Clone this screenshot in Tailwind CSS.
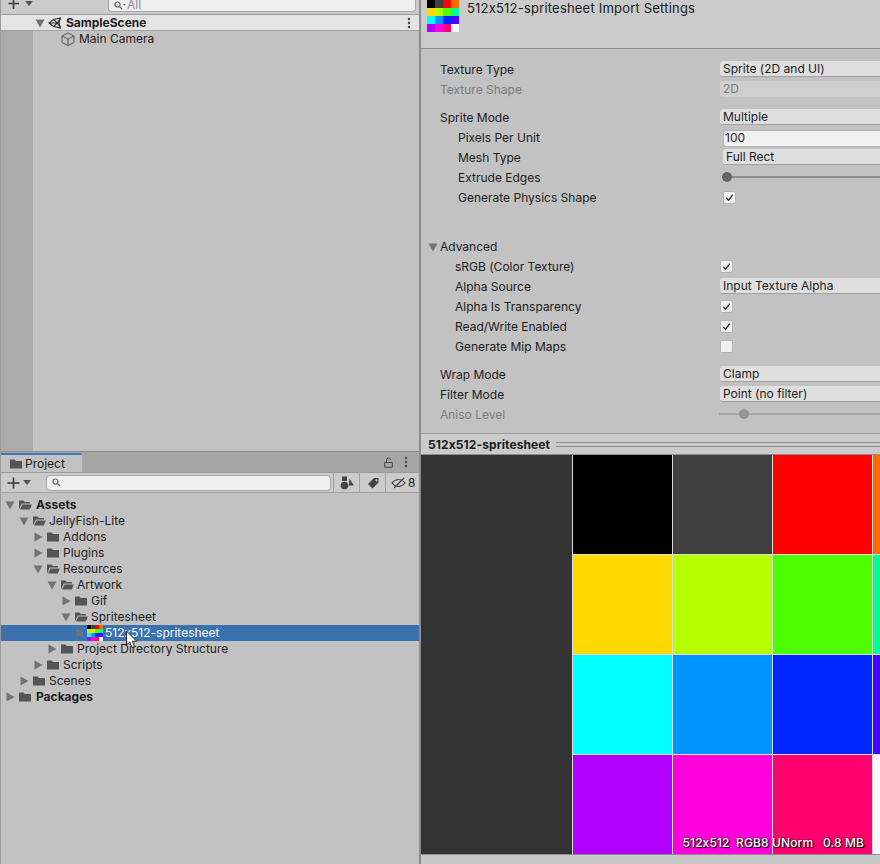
<!DOCTYPE html>
<html lang="en">
<head>
  <meta charset="UTF-8">
  <title>Unity Import Settings</title>
  <script src="https://cdn.jsdelivr.net/npm/@tailwindcss/browser@4"></script>
</head>
<body class="bg-[#c2c2c2]">
  <svg class="hidden">
    <symbol id="down" viewBox="0 0 10 10"><path d="M0.5 1.5H9.5L5 9.5Z" fill="#737373"/></symbol>
    <symbol id="right" viewBox="0 0 10 10"><path d="M1.5 0.5V9.5L9.5 5Z" fill="#737373"/></symbol>
    <symbol id="closed" viewBox="0 0 14 14"><path d="M1 2.500H5.500L7 4H13V11.500H1Z" fill="#555"/></symbol>
    <symbol id="open" viewBox="0 0 14 14"><path d="M1 2.500H5.500L7 4H12V5.500H3.800L1 11.500ZM4.500 6.500H13.800L11.800 11.500H2Z" fill="#555"/></symbol>
    <symbol id="check" viewBox="0 0 12 12"><path d="M2.500 6.500L5 9L9.500 3" fill="none" stroke="#333" stroke-width="1.400"/></symbol>
    <symbol id="thumb" viewBox="0 0 4 4" shape-rendering="crispEdges">
      <rect width="1" height="1" fill="#000"/><rect x="1" width="1" height="1" fill="#404040"/><rect x="2" width="1" height="1" fill="#f00"/><rect x="3" width="1" height="1" fill="#ff6a00"/>
      <rect y="1" width="1" height="1" fill="#ffd800"/><rect x="1" y="1" width="1" height="1" fill="#b6ff00"/><rect x="2" y="1" width="1" height="1" fill="#4cff00"/><rect x="3" y="1" width="1" height="1" fill="#00ff90"/>
      <rect y="2" width="1" height="1" fill="#0ff"/><rect x="1" y="2" width="1" height="1" fill="#0094ff"/><rect x="2" y="2" width="1" height="1" fill="#0026ff"/><rect x="3" y="2" width="1" height="1" fill="#4800ff"/>
      <rect y="3" width="1" height="1" fill="#b200ff"/><rect x="1" y="3" width="1" height="1" fill="#ff00dc"/><rect x="2" y="3" width="1" height="1" fill="#ff006e"/><rect x="3" y="3" width="1" height="1" fill="#f6f6fb"/>
    </symbol>
  </svg>

  <div class="relative flex h-[864px] w-[880px] overflow-hidden font-['Inter',sans-serif] text-[12px] text-[#1c1c1c] [font-variant-ligatures:no-contextual]">

    <!-- Left column -->
    <div class="flex w-[420px] shrink-0 flex-col border-x border-[#8c8c8c] border-l-[#9a9a9a]">

      <!-- Hierarchy -->
      <div class="flex h-[451px] shrink-0 flex-col">
        <div class="flex h-[15px] shrink-0 border-b border-[#9c9c9c] bg-[#cbcbcb]">
          <div class="flex h-[12px] w-[107px] shrink-0 items-start pl-[7px]">
            <svg class="w-[14px] h-[9px]" viewBox="0 0 14 9"><path d="M5.500 0V9M0.500 3.500H11" stroke="#3a3a3a" stroke-width="1.600" fill="none"/></svg>
            <svg class="ml-[3px] mt-[1px] h-[5px] w-[8px]" viewBox="0 0 8 5"><path d="M0 0H8L4 5Z" fill="#555"/></svg>
          </div>
          <div class="flex h-[12px] w-[308px] items-start overflow-hidden rounded-b-[4px] border border-t-0 border-[#a8a8a8] bg-[#efefef] pl-[5px]">
            <svg class="mt-[1px] h-[9px] w-[12px]" viewBox="0 0 12 9"><circle cx="3.500" cy="3.500" r="2.500" fill="none" stroke="#666" stroke-width="1.200"/><path d="M5.500 5.500L8 8" stroke="#666" stroke-width="1.300"/><path d="M9 3H12L10.500 5Z" fill="#777"/></svg>
            <span class="ml-[1px] mt-[-1px] block h-[11px] leading-[11px] text-[#8f8f8f]">All</span>
          </div>
        </div>
        <div class="flex h-[16px] shrink-0 items-center border-b border-[#a2a2a2] bg-[#e4e4e4] pl-[34px] pr-[8px]">
          <svg class="h-[10px] w-[10px]" viewBox="0 0 10 10"><use href="#down"/></svg>
          <svg class="ml-[3px] h-[14px] w-[14px]" viewBox="0 0 14 14"><path d="M12.500 2L5.500 3.500L1 7L5.500 10.500L12.500 12L11 7ZM5.500 3.500L9.500 7L5.500 10.500M9.500 7H1M12.500 2L9.500 7L12.500 12" fill="none" stroke="#333" stroke-width="1.100"/></svg>
          <span class="ml-[4px] font-bold">SampleScene</span>
          <svg class="ml-auto h-[12px] w-[4px]" viewBox="0 0 4 12"><circle cx="2" cy="2" r="1.200" fill="#444"/><circle cx="2" cy="6" r="1.200" fill="#444"/><circle cx="2" cy="10" r="1.200" fill="#444"/></svg>
        </div>
        <div class="flex flex-1">
          <div class="w-[32px] shrink-0 bg-[#ababab]"></div>
          <div class="flex-1">
            <div class="flex h-[16px] items-center pl-[28px]">
              <svg class="h-[14px] w-[14px]" viewBox="0 0 14 14"><path d="M7 1L13 4V10.500L7 13.500L1 10.500V4ZM1 4L7 7L13 4M7 7V13.500" fill="none" stroke="#555" stroke-width="1"/></svg>
              <span class="ml-[4px]">Main Camera</span>
            </div>
          </div>
        </div>
      </div>

      <!-- Project -->
      <div class="flex flex-1 flex-col border-t border-[#8c8c8c]">
        <div class="flex h-[20px] shrink-0 items-stretch bg-[#a6a6a6]">
          <div class="mt-[1px] flex w-[81px] items-center rounded-tr-[2px] border-t-2 border-[#3a78c2] bg-[#c2c2c2] pl-[8px]">
            <svg class="h-[14px] w-[14px]" viewBox="0 0 14 14"><use href="#closed"/></svg>
            <span class="ml-[2px]">Project</span>
          </div>
          <div class="ml-auto flex items-center pr-[11px]">
            <svg class="h-[11px] w-[9px]" viewBox="0 0 9 11"><path d="M2.500 5V3A2 2 0 0 1 6.500 3M0.700 5.500H8.300V10.300H0.700Z" fill="none" stroke="#444" stroke-width="1"/></svg>
            <svg class="ml-[11px] h-[12px] w-[4px]" viewBox="0 0 4 12"><circle cx="2" cy="2" r="1.200" fill="#444"/><circle cx="2" cy="6" r="1.200" fill="#444"/><circle cx="2" cy="10" r="1.200" fill="#444"/></svg>
          </div>
        </div>
        <div class="flex h-[21px] shrink-0 items-center border-y border-[#a2a2a2] border-t-[#9a9a9a] bg-[#cbcbcb] pl-[6px]">
          <svg class="h-[12px] w-[14px]" viewBox="0 0 14 12"><path d="M6.500 0.500V11.500M0.500 6H12.500" stroke="#3a3a3a" stroke-width="1.600" fill="none"/></svg>
          <svg class="ml-[2px] h-[5px] w-[8px]" viewBox="0 0 8 5"><path d="M0 0H8L4 5Z" fill="#555"/></svg>
          <div class="ml-[15px] flex h-[16px] w-[285px] items-center rounded-[4px] border border-[#a8a8a8] bg-[#efefef] pl-[5px]">
            <svg class="h-[9px] w-[9px]" viewBox="0 0 9 9"><circle cx="3.500" cy="3.500" r="2.500" fill="none" stroke="#666" stroke-width="1.200"/><path d="M5.500 5.500L8 8" stroke="#666" stroke-width="1.300"/></svg>
          </div>
          <div class="ml-[2px] flex h-[19px] w-[26px] items-center justify-center border-l border-[#a2a2a2]">
            <svg class="h-[14px] w-[14px]" viewBox="0 0 14 14"><rect x="2" y="0.500" width="5" height="4.500" fill="#444"/><path d="M9.500 2.500L13.800 9.500H8.800Z" fill="#444"/><circle cx="4.500" cy="9.500" r="3.800" fill="#444"/></svg>
          </div>
          <div class="flex h-[19px] w-[26px] items-center justify-center border-l border-[#a2a2a2]">
            <svg class="h-[12px] w-[12px]" viewBox="0 0 12 12"><path d="M7 1H11.500V5.500L5.500 11.500L1 7ZM9.500 2.200A1 1 0 1 0 9.501 2.200Z" fill="#444" fill-rule="evenodd"/></svg>
          </div>
          <div class="flex h-[19px] flex-1 items-center border-l border-[#a2a2a2] pl-[5px]">
            <svg class="h-[12px] w-[15px]" viewBox="0 0 15 12"><path d="M1 6C3 3.500 5 2.500 7.500 2.500S12 3.500 14 6C12 8.500 10 9.500 7.500 9.500S3 8.500 1 6ZM3 11L13 1" fill="none" stroke="#444" stroke-width="1.100"/></svg>
            <span class="ml-[2px]">8</span>
          </div>
        </div>

        <!-- Tree -->
        <div class="pt-[4px]">
          <div class="flex h-[16px] items-center pl-[4px]"><svg class="h-[10px] w-[10px]"><use href="#down"/></svg><svg class="ml-[3px] h-[14px] w-[14px]"><use href="#open"/></svg><span class="ml-[4px] font-bold">Assets</span></div>
          <div class="flex h-[16px] items-center pl-[18px]"><svg class="h-[10px] w-[10px]"><use href="#down"/></svg><svg class="ml-[3px] h-[14px] w-[14px]"><use href="#open"/></svg><span class="ml-[3px]">JellyFish-Lite</span></div>
          <div class="flex h-[16px] items-center pl-[32px]"><svg class="h-[10px] w-[10px]"><use href="#right"/></svg><svg class="ml-[3px] h-[14px] w-[14px]"><use href="#closed"/></svg><span class="ml-[3px]">Addons</span></div>
          <div class="flex h-[16px] items-center pl-[32px]"><svg class="h-[10px] w-[10px]"><use href="#right"/></svg><svg class="ml-[3px] h-[14px] w-[14px]"><use href="#closed"/></svg><span class="ml-[3px]">Plugins</span></div>
          <div class="flex h-[16px] items-center pl-[32px]"><svg class="h-[10px] w-[10px]"><use href="#down"/></svg><svg class="ml-[3px] h-[14px] w-[14px]"><use href="#open"/></svg><span class="ml-[3px]">Resources</span></div>
          <div class="flex h-[16px] items-center pl-[46px]"><svg class="h-[10px] w-[10px]"><use href="#down"/></svg><svg class="ml-[3px] h-[14px] w-[14px]"><use href="#open"/></svg><span class="ml-[3px]">Artwork</span></div>
          <div class="flex h-[16px] items-center pl-[60px]"><svg class="h-[10px] w-[10px]"><use href="#right"/></svg><svg class="ml-[3px] h-[14px] w-[14px]"><use href="#closed"/></svg><span class="ml-[3px]">Gif</span></div>
          <div class="flex h-[16px] items-center pl-[60px]"><svg class="h-[10px] w-[10px]"><use href="#down"/></svg><svg class="ml-[3px] h-[14px] w-[14px]"><use href="#open"/></svg><span class="ml-[3px]">Spritesheet</span></div>
          <div class="flex h-[16px] items-center bg-[#3a72b0] pl-[74px] text-white"><svg class="h-[10px] w-[10px]"><use href="#right"/></svg><svg class="ml-[2px] h-[16px] w-[16px]"><use href="#thumb"/></svg><span class="ml-[2px]">512x512-spritesheet</span></div>
          <div class="flex h-[16px] items-center pl-[46px]"><svg class="h-[10px] w-[10px]"><use href="#right"/></svg><svg class="ml-[3px] h-[14px] w-[14px]"><use href="#closed"/></svg><span class="ml-[3px]">Project Directory Structure</span></div>
          <div class="flex h-[16px] items-center pl-[32px]"><svg class="h-[10px] w-[10px]"><use href="#right"/></svg><svg class="ml-[3px] h-[14px] w-[14px]"><use href="#closed"/></svg><span class="ml-[3px]">Scripts</span></div>
          <div class="flex h-[16px] items-center pl-[18px]"><svg class="h-[10px] w-[10px]"><use href="#right"/></svg><svg class="ml-[3px] h-[14px] w-[14px]"><use href="#closed"/></svg><span class="ml-[3px]">Scenes</span></div>
          <div class="flex h-[16px] items-center pl-[4px]"><svg class="h-[10px] w-[10px]"><use href="#right"/></svg><svg class="ml-[3px] h-[14px] w-[14px]"><use href="#closed"/></svg><span class="ml-[4px] font-bold">Packages</span></div>
        </div>
      </div>
    </div>

    <!-- Right column -->
    <div class="flex w-[460px] shrink-0 flex-col border-l border-[#8c8c8c]">
      <div class="flex h-[49px] shrink-0 border-b border-[#8c8c8c] bg-[#cbcbcb] pl-[6px]">
        <svg class="h-[32px] w-[32px]"><use href="#thumb"/></svg>
        <span class="ml-[8px] mt-[-1px] text-[13px] tracking-[0.2px]">512x512-spritesheet Import Settings</span>
      </div>

      <div class="h-[385px] shrink-0 overflow-hidden border-b border-[#a2a2a2] pt-[11px]">
        <div class="flex h-[20px] items-center"><span class="w-[299px] shrink-0 pl-[19px]">Texture Type</span><div class="mt-[1px] flex h-[16px] flex-1 items-center self-start rounded-l-[3px] border-b border-[#a0a0a0] bg-[#dfdfdf] pl-[3px]">Sprite (2D and UI)</div></div>
        <div class="flex h-[20px] items-center text-[#7d7d7d]"><span class="w-[299px] shrink-0 pl-[19px]">Texture Shape</span><div class="mt-[1px] flex h-[16px] flex-1 items-center self-start rounded-l-[3px] bg-[#cfcfcf] pl-[3px]">2D</div></div>

        <div class="mt-[8px] flex h-[20px] items-center"><span class="w-[299px] shrink-0 pl-[19px]">Sprite Mode</span><div class="mt-[1px] flex h-[16px] flex-1 items-center self-start rounded-l-[3px] border-b border-[#a0a0a0] bg-[#dfdfdf] pl-[3px]">Multiple</div></div>
        <div class="flex h-[20px] items-center"><span class="w-[302px] shrink-0 pl-[37px]">Pixels Per Unit</span><div class="flex h-[17px] flex-1 items-center rounded-l-[3px] border border-r-0 border-[#b4b4b4] bg-[#f0f0f0] pl-[1px]">100</div></div>
        <div class="flex h-[20px] items-center"><span class="w-[302px] shrink-0 pl-[37px]">Mesh Type</span><div class="mt-[1px] flex h-[16px] flex-1 items-center self-start rounded-l-[3px] border-b border-[#a0a0a0] bg-[#dfdfdf] pl-[3px]">Full Rect</div></div>
        <div class="flex h-[20px] items-center"><span class="w-[301px] shrink-0 pl-[37px]">Extrude Edges</span><div class="relative h-[10px] flex-1"><div class="absolute left-0 top-[3px] h-[2px] w-full bg-[#8f8f8f]"></div><div class="absolute left-0 top-[-1px] h-[10px] w-[10px] rounded-full bg-[#666]"></div></div></div>
        <div class="flex h-[20px] items-center"><span class="w-[302px] shrink-0 pl-[37px]">Generate Physics Shape</span><div class="mt-[3px] h-[13px] w-[13px] self-start rounded-[2px] border border-[#b4b4b4] bg-[#f0f0f0]"><svg class="h-[11px] w-[11px]"><use href="#check"/></svg></div></div>

        <div class="mt-[29px] flex h-[20px] items-center pl-[7px]"><svg class="h-[10px] w-[10px]"><use href="#down"/></svg><span class="ml-[2px]">Advanced</span></div>
        <div class="flex h-[20px] items-center"><span class="w-[299px] shrink-0 pl-[34px]">sRGB (Color Texture)</span><div class="mt-[3px] h-[13px] w-[13px] self-start rounded-[2px] border border-[#b4b4b4] bg-[#f0f0f0]"><svg class="h-[11px] w-[11px]"><use href="#check"/></svg></div></div>
        <div class="flex h-[20px] items-center"><span class="w-[299px] shrink-0 pl-[34px]">Alpha Source</span><div class="mt-[1px] flex h-[16px] flex-1 items-center self-start rounded-l-[3px] border-b border-[#a0a0a0] bg-[#dfdfdf] pl-[3px]">Input Texture Alpha</div></div>
        <div class="flex h-[20px] items-center"><span class="w-[299px] shrink-0 pl-[34px]">Alpha Is Transparency</span><div class="mt-[3px] h-[13px] w-[13px] self-start rounded-[2px] border border-[#b4b4b4] bg-[#f0f0f0]"><svg class="h-[11px] w-[11px]"><use href="#check"/></svg></div></div>
        <div class="flex h-[20px] items-center"><span class="w-[299px] shrink-0 pl-[34px]">Read/Write Enabled</span><div class="mt-[3px] h-[13px] w-[13px] self-start rounded-[2px] border border-[#b4b4b4] bg-[#f0f0f0]"><svg class="h-[11px] w-[11px]"><use href="#check"/></svg></div></div>
        <div class="flex h-[20px] items-center"><span class="w-[299px] shrink-0 pl-[34px]">Generate Mip Maps</span><div class="mt-[3px] h-[13px] w-[13px] self-start rounded-[2px] border border-[#b4b4b4] bg-[#f0f0f0]"></div></div>

        <div class="mt-[8px] flex h-[20px] items-center"><span class="w-[299px] shrink-0 pl-[19px]">Wrap Mode</span><div class="mt-[1px] flex h-[16px] flex-1 items-center self-start rounded-l-[3px] border-b border-[#a0a0a0] bg-[#dfdfdf] pl-[3px]">Clamp</div></div>
        <div class="flex h-[20px] items-center"><span class="w-[299px] shrink-0 pl-[19px]">Filter Mode</span><div class="mt-[1px] flex h-[16px] flex-1 items-center self-start rounded-l-[3px] border-b border-[#a0a0a0] bg-[#dfdfdf] pl-[3px]">Point (no filter)</div></div>
        <div class="flex h-[20px] items-center text-[#7d7d7d]"><span class="w-[298px] shrink-0 pl-[19px]">Aniso Level</span><div class="relative h-[10px] flex-1"><div class="absolute left-0 top-[3px] h-[2px] w-full bg-[#a8a8a8]"></div><div class="absolute left-[20px] top-[-1px] h-[10px] w-[10px] rounded-full bg-[#949494]"></div></div></div>
      </div>

      <div class="flex h-[20px] shrink-0 items-center bg-[#cbcbcb] pl-[7px] pt-[1px]">
        <span class="font-bold tracking-[0.1px]">512x512-spritesheet</span>
        <div class="ml-[6px] h-[5px] flex-1 border-y border-[#8c8c8c]"></div>
      </div>

      <!-- Preview -->
      <div class="relative flex h-[400px] shrink-0 border-t border-[#8c8c8c] bg-[#333333]">
        <div class="w-[151px] shrink-0"></div>
        <div class="grid w-[400px] shrink-0 grid-cols-[100px_100px_100px_100px] grid-rows-[100px_100px_100px_100px] bg-[#dcdcdc]">
          <div class="ml-[1px] mb-[1px] bg-[#000000]"></div><div class="ml-[1px] mb-[1px] bg-[#404040]"></div><div class="ml-[1px] mb-[1px] bg-[#ff0000]"></div><div class="ml-[1px] mb-[1px] bg-[#ff6a00]"></div>
          <div class="ml-[1px] mb-[1px] bg-[#ffd800]"></div><div class="ml-[1px] mb-[1px] bg-[#b6ff00]"></div><div class="ml-[1px] mb-[1px] bg-[#4cff00]"></div><div class="ml-[1px] mb-[1px] bg-[#00ff90]"></div>
          <div class="ml-[1px] mb-[1px] bg-[#00ffff]"></div><div class="ml-[1px] mb-[1px] bg-[#0094ff]"></div><div class="ml-[1px] mb-[1px] bg-[#0026ff]"></div><div class="ml-[1px] mb-[1px] bg-[#4800ff]"></div>
          <div class="ml-[1px] mb-[1px] bg-[#b200ff]"></div><div class="ml-[1px] mb-[1px] bg-[#ff00dc]"></div><div class="ml-[1px] mb-[1px] bg-[#ff006e]"></div><div class="ml-[1px] mb-[1px] bg-[#f6f6fb]"></div>
        </div>
        <span class="absolute bottom-[2px] right-[16px] whitespace-pre font-medium tracking-[0.1px] text-white [text-shadow:1px_1px_1px_#000,0_0_2px_#000]">512x512  RGB8 UNorm   0.8 MB</span>
      </div>
      <div class="flex-1 border-t border-[#8c8c8c] bg-[#c8c8c8]"></div>
    </div>

    <!-- Mouse cursor -->
    <svg class="absolute left-[125px] top-[630px] h-[20px] w-[14px]" viewBox="0 0 14 20"><path d="M1.500 1V15L4.800 12L7 17.500L9.500 16.500L7.300 11.300H11.800Z" fill="#fff" stroke="#222" stroke-width="1"/></svg>
  </div>
</body>
</html>
